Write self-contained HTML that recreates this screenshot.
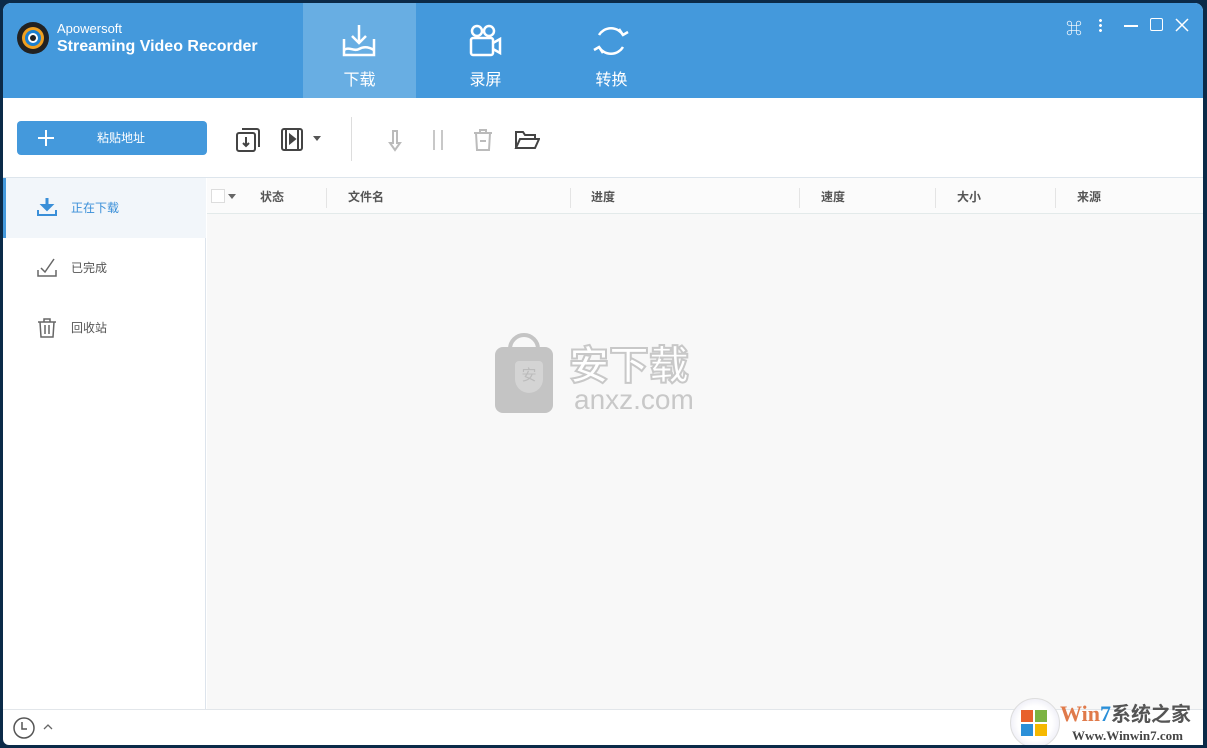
<!DOCTYPE html>
<html><head><meta charset="utf-8"><style>
*{margin:0;padding:0;box-sizing:border-box}
body{width:1207px;height:748px;background:#0b2a48;position:relative;overflow:hidden;font-family:"Liberation Sans","Noto Sans CJK SC",sans-serif}
.win{position:absolute;left:3px;top:3px;width:1200px;height:742px;background:#fff;border-radius:8px 8px 0 6px;overflow:hidden}
.hdr{position:absolute;left:0;top:0;width:1200px;height:95px;background:#4499dc}
.abs{position:absolute;white-space:nowrap}
.tab{position:absolute;top:0;height:95px;width:113px;color:#fff;font-size:16px;text-align:center;line-height:18px}
.tab span{position:absolute;left:0;right:0;top:69px}
.tab svg{position:absolute;left:38px;top:20px}
.th{position:absolute;top:187px;font-size:12px;color:#555;font-weight:bold;line-height:14px}
.sep{position:absolute;top:185px;width:1px;height:20px;background:#e4e4e4}
.side{position:absolute;font-size:12px;color:#555;line-height:14px}
</style></head><body>
<div class="win">
<div class="hdr">
 <svg class="abs" style="left:13px;top:18px" width="34" height="34" viewBox="0 0 34 34"><circle cx="17" cy="17" r="16" fill="#222"/><circle cx="17" cy="17" r="11" fill="#f0a020"/><circle cx="17" cy="17" r="8" fill="#1a7fd0"/><circle cx="17" cy="17" r="5" fill="#fff"/><circle cx="17" cy="17" r="3" fill="#222"/></svg>
 <div class="abs" style="left:54px;top:18px;color:#fff;font-size:13px">Apowersoft</div>
 <div class="abs" style="left:54px;top:35px;color:#fff;font-size:16px;font-weight:bold">Streaming Video Recorder</div>
 <div class="tab" style="left:300px;background:#68aee3"><svg width="36" height="36" viewBox="0 0 36 36" fill="none" stroke="#fff" stroke-width="2.5"><path d="M18 2v18M11 13l7 7 7-7"/><path d="M3 16v16h30V16"/><path d="M3 27c5-4 10 2 15-1s10-2 15 1"/></svg><span>下载</span></div>
 <div class="tab" style="left:426px"><svg width="36" height="36" viewBox="0 0 36 36" fill="none" stroke="#fff" stroke-width="2.5"><circle cx="10" cy="8" r="5"/><circle cx="22" cy="8" r="5"/><rect x="4" y="15" width="22" height="17" rx="2"/><path d="M26 20l7-4v14l-7-4"/></svg><span>录屏</span></div>
 <div class="tab" style="left:552px"><svg width="36" height="36" viewBox="0 0 36 36" fill="none" stroke="#fff" stroke-width="2.5"><path d="M30 12A14 14 0 0 0 6 12M6 24a14 14 0 0 0 24 0"/><path d="M26 6l4 6 5-3M10 30l-4-6-5 3"/></svg><span>转换</span></div>
 <div class="abs" style="left:1063px;top:12px;color:#fff;font-size:16px">⌘</div>
 <div class="abs" style="left:1096px;top:15px;width:3px;height:14px;background:radial-gradient(circle,#fff 1.3px,transparent 1.6px) 0 0/3px 5px"></div>
 <div class="abs" style="left:1121px;top:22px;width:14px;height:1.5px;background:#fff"></div>
 <div class="abs" style="left:1147px;top:15px;width:13px;height:13px;border:1.5px solid #fff;border-radius:2px"></div>
 <svg class="abs" style="left:1172px;top:15px" width="14" height="14"><path d="M1 1l12 12M13 1L1 13" stroke="#fff" stroke-width="1.5"/></svg>
</div>
<div class="abs" style="left:14px;top:118px;width:190px;height:34px;background:#4499dc;border-radius:4px;color:#fff;font-size:12px">
 <div class="abs" style="left:21px;top:16px;width:16px;height:2px;background:#fff"></div>
 <div class="abs" style="left:28px;top:9px;width:2px;height:16px;background:#fff"></div>
 <div class="abs" style="left:80px;top:10px;line-height:14px">粘贴地址</div>
</div>
<svg class="abs" style="left:232px;top:124px" width="28" height="26" viewBox="0 0 28 26" fill="none" stroke="#444" stroke-width="2"><rect x="2" y="6" width="18" height="18" rx="2"/><path d="M7 2h15a2 2 0 0 1 2 2v16"/><path d="M11 10v9M8 16l3 3 3-3"/></svg>
<svg class="abs" style="left:277px;top:124px" width="26" height="26" viewBox="0 0 26 26" fill="none" stroke="#444" stroke-width="2"><rect x="2" y="2" width="20" height="21" rx="2"/><path d="M6 2v21M18 2v21"/><path d="M10 8l5 4-5 4z" fill="#444"/></svg>
<div class="abs" style="left:310px;top:133px;border:4px solid transparent;border-top:5px solid #555"></div>
<div class="abs" style="left:348px;top:114px;width:1px;height:44px;background:#ddd"></div>
<svg class="abs" style="left:384px;top:126px" width="16" height="24" viewBox="0 0 16 24" fill="none" stroke="#bbb" stroke-width="2"><path d="M6 2h4v12h3l-5 7-5-7h3z"/></svg>
<div class="abs" style="left:430px;top:127px;width:2px;height:20px;background:#c8c8c8"></div>
<div class="abs" style="left:438px;top:127px;width:2px;height:20px;background:#c8c8c8"></div>
<svg class="abs" style="left:469px;top:125px" width="22" height="24" viewBox="0 0 22 24" fill="none" stroke="#bbb" stroke-width="2"><path d="M2 5h18M8 5V2h6v3M4 5l1 17h12l1-17M8 13h6"/></svg>
<svg class="abs" style="left:511px;top:126px" width="26" height="22" viewBox="0 0 26 22" fill="none" stroke="#444" stroke-width="2"><path d="M2 19V3h7l2 3h10v4"/><path d="M2 19l4-9h19l-4 9z"/></svg>
<div class="abs" style="left:0;top:174px;width:1200px;height:1px;background:#dde5ec"></div>
<div class="abs" style="left:0;top:175px;width:203px;height:531px;background:#fff;border-right:1px solid #dde4ec"></div>
<div class="abs" style="left:0;top:175px;width:203px;height:60px;background:#f2f6fa;border-left:3px solid #4499dc"></div>
<svg class="abs" style="left:34px;top:194px" width="20" height="20" viewBox="0 0 20 20" fill="none" stroke="#3a8fd8" stroke-width="2"><path d="M10 1v11" stroke-width="3"/><path d="M5 8l5 5 5-5z" fill="#3a8fd8"/><path d="M1 13v5h18v-5"/></svg>
<div class="side" style="left:68px;top:198px;color:#3a8fd8">正在下载</div>
<svg class="abs" style="left:34px;top:254px" width="20" height="20" viewBox="0 0 20 20" fill="none" stroke="#666" stroke-width="1.5"><path d="M4 11l4 4 9-13"/><path d="M1 13v6h18v-6"/></svg>
<div class="side" style="left:68px;top:258px">已完成</div>
<svg class="abs" style="left:34px;top:313px" width="20" height="22" viewBox="0 0 20 22" fill="none" stroke="#666" stroke-width="1.5"><path d="M1 6h18M7 6V3h6v3M3 6l1 15h12l1-15M8 9v9M12 9v9"/></svg>
<div class="side" style="left:68px;top:318px">回收站</div>
<div class="abs" style="left:204px;top:175px;width:996px;height:531px;background:#f8f8f8"></div>
<div class="abs" style="left:204px;top:175px;width:996px;height:36px;background:#fbfbfb;border-bottom:1px solid #e3eaea"></div>
<div class="abs" style="left:208px;top:186px;width:14px;height:14px;border:1px solid #ddd;background:#fff"></div>
<div class="abs" style="left:225px;top:191px;border:4px solid transparent;border-top:5px solid #666"></div>
<div class="th" style="left:257px">状态</div>
<div class="sep" style="left:323px"></div><div class="th" style="left:345px">文件名</div>
<div class="sep" style="left:567px"></div><div class="th" style="left:588px">进度</div>
<div class="sep" style="left:796px"></div><div class="th" style="left:818px">速度</div>
<div class="sep" style="left:932px"></div><div class="th" style="left:954px">大小</div>
<div class="sep" style="left:1052px"></div><div class="th" style="left:1074px">来源</div>
<div class="abs" style="left:492px;top:344px;width:58px;height:66px;background:#c4c4c4;border-radius:8px"></div>
<div class="abs" style="left:505px;top:330px;width:32px;height:28px;border:4px solid #c4c4c4;border-radius:16px 16px 0 0"></div>
<div class="abs" style="left:512px;top:358px;width:28px;height:32px;background:#d4d4d4;border-radius:4px 4px 14px 14px;color:#bbb;font-size:15px;text-align:center;line-height:30px">安</div>
<div class="abs" style="left:566px;top:340px;font-size:40px;color:#fff;font-weight:bold;-webkit-text-stroke:2px #c8c8c8;line-height:46px">安下载</div>
<div class="abs" style="left:571px;top:381px;font-size:28px;color:#c8c8c8;line-height:32px">anxz.com</div>
<div class="abs" style="left:0;top:706px;width:1200px;height:1px;background:#e2e6ea"></div>
<svg class="abs" style="left:9px;top:713px" width="24" height="24" viewBox="0 0 24 24" fill="none" stroke="#555" stroke-width="1.5"><circle cx="12" cy="12" r="10"/><path d="M10 6v7h5"/></svg>
<svg class="abs" style="left:40px;top:720px" width="10" height="8"><path d="M1 6l4-4 4 4" fill="none" stroke="#666" stroke-width="1.3"/></svg>
<div class="abs" style="left:1007px;top:695px;width:50px;height:50px;border-radius:50%;background:radial-gradient(circle,#fff 50%,#dde 100%);border:1px solid #ddd"></div>
<div class="abs" style="left:1018px;top:707px;width:12px;height:12px;background:#e8612c"></div><div class="abs" style="left:1032px;top:707px;width:12px;height:12px;background:#7cb342"></div>
<div class="abs" style="left:1018px;top:721px;width:12px;height:12px;background:#2a8fd8"></div><div class="abs" style="left:1032px;top:721px;width:12px;height:12px;background:#f5b800"></div>
<div class="abs" style="left:1057px;top:697px;font-family:'Liberation Serif',serif;font-size:22px;font-weight:bold;color:#e07a4a;line-height:26px">Win<span style="color:#2a8fd8">7</span><span style="color:#555;font-family:'Noto Sans CJK SC',sans-serif;font-size:20px">系统之家</span></div>
<div class="abs" style="left:1069px;top:725px;font-family:'Liberation Serif',serif;font-size:13px;font-weight:bold;color:#444;line-height:16px">Www.Winwin7.com</div>
</div>
</body></html>
